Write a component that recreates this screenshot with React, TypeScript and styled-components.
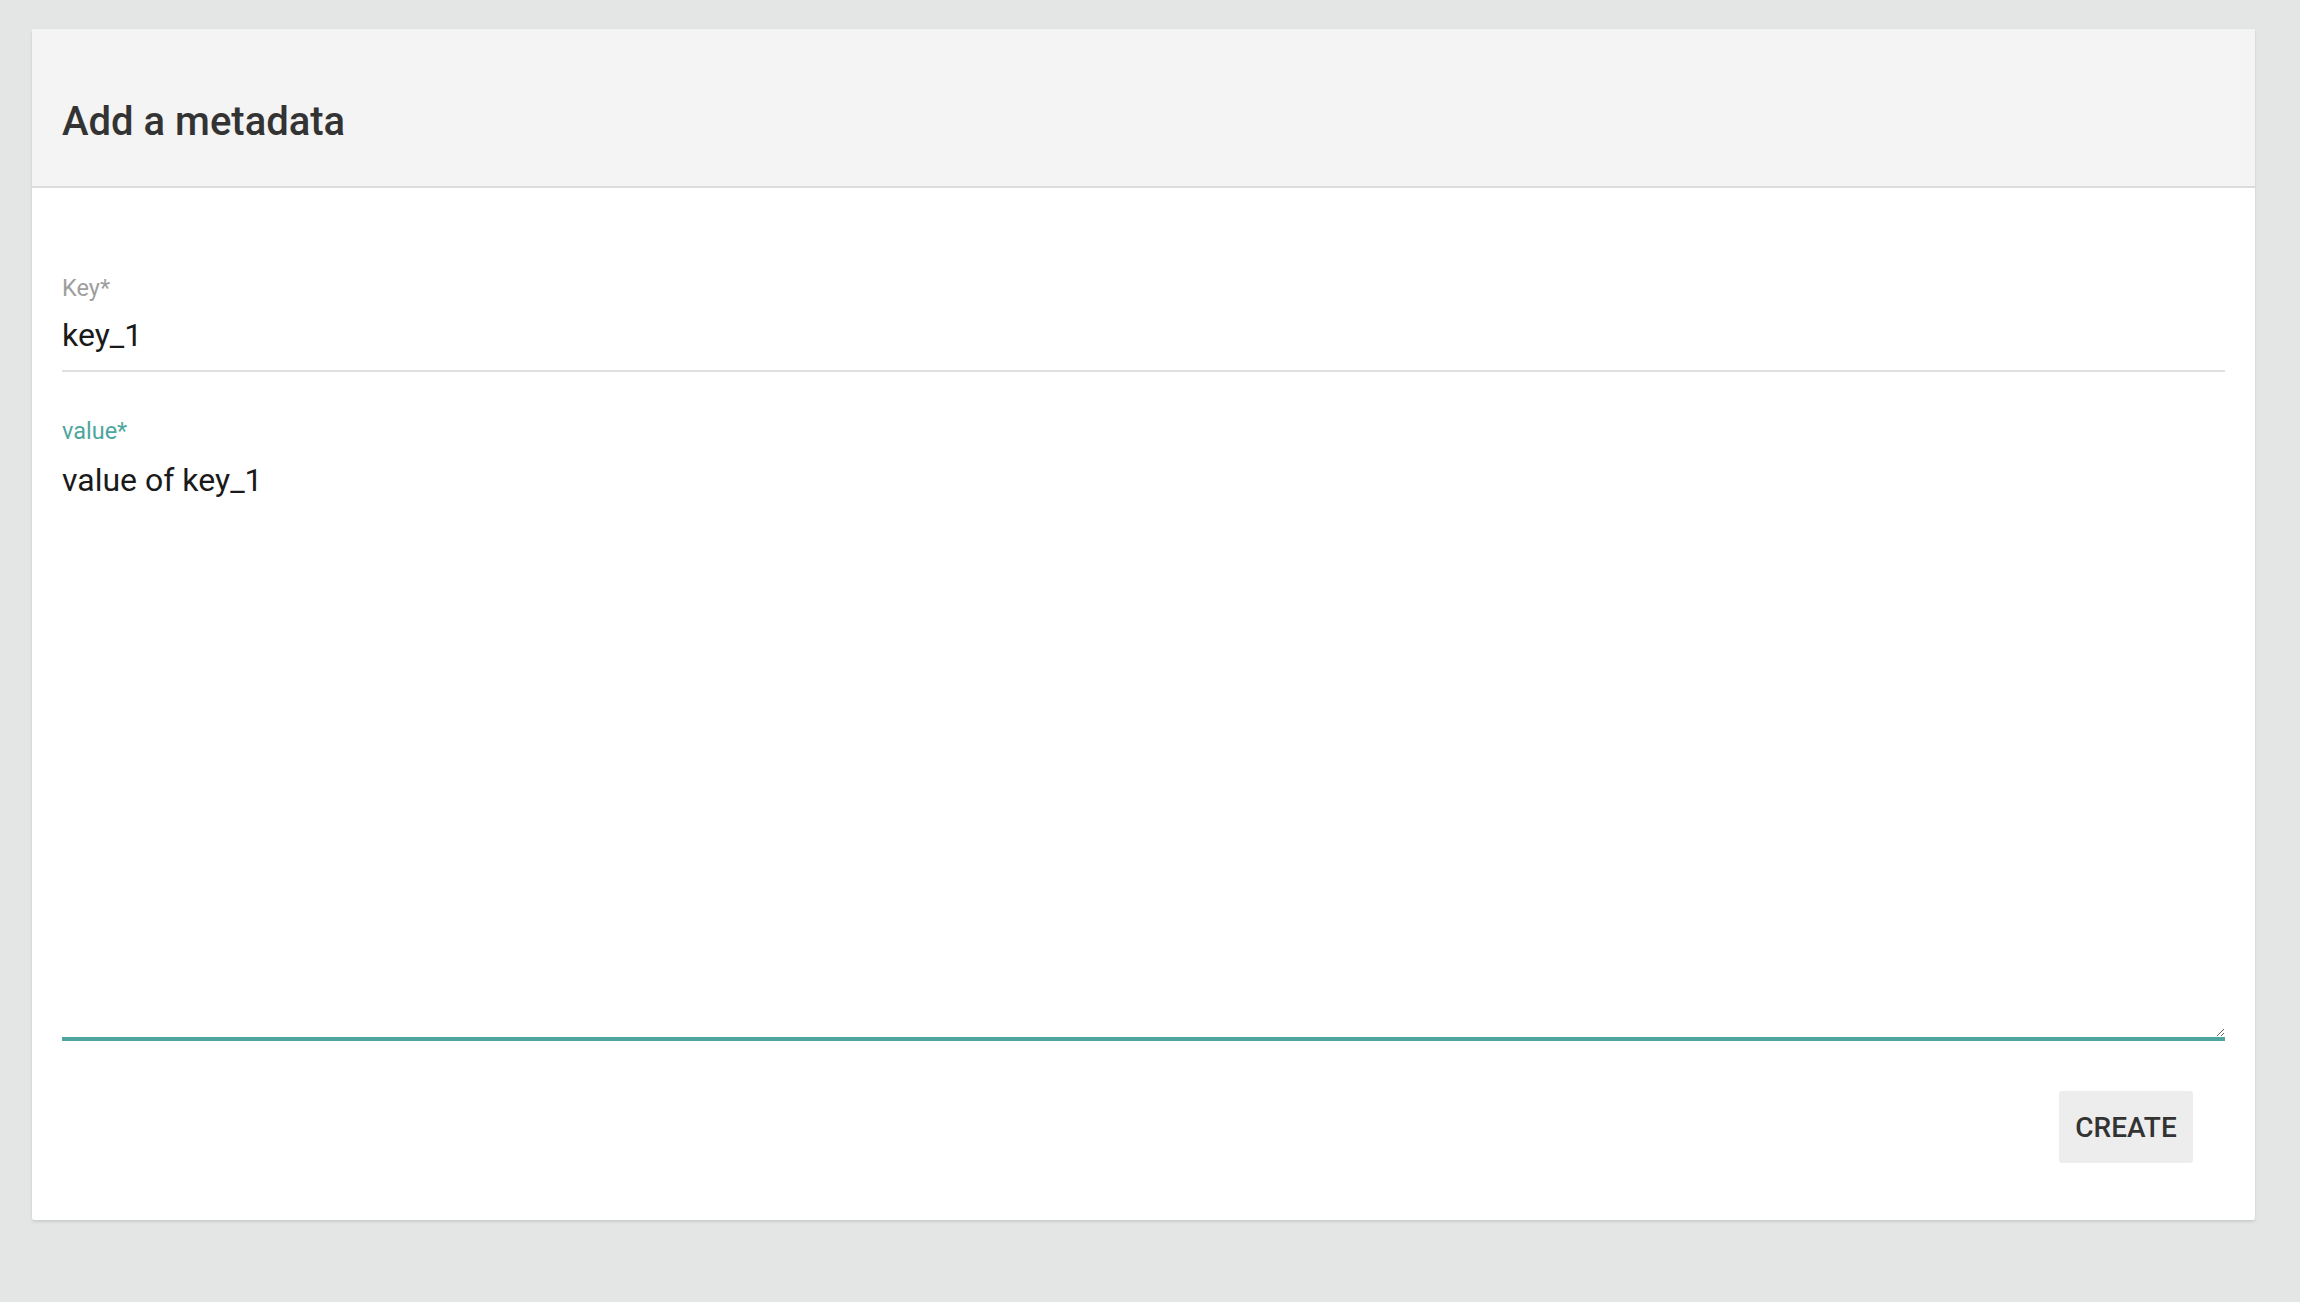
import styled, { createGlobalStyle } from 'styled-components';

const GlobalStyle = createGlobalStyle`
	html, body {
		margin: 0;
		padding: 0;
		background: #e4e6e5;
		font-family: Roboto, 'Liberation Sans', sans-serif;
	}
`;

const Page = styled.div`
	padding: 29px 45px 82px 32px;
	min-height: 1302px;
	box-sizing: border-box;
`;

const Card = styled.section`
	background: #fff;
	border-radius: 2px;
	box-shadow: 0 2px 3px rgba(0, 0, 0, 0.1), 0 0 1px rgba(0, 0, 0, 0.08);
	overflow: hidden;
`;

const Header = styled.header`
	height: 159px;
	box-sizing: border-box;
	padding: 69px 30px 0;
	background: #f4f4f4;
	border-bottom: 2px solid #dcdcdc;
`;

const Title = styled.h2`
	margin: 0;
	font-size: 40px;
	line-height: 48px;
	font-weight: 500;
	color: #333;
`;

const Body = styled.form`
	display: flex;
	flex-direction: column;
	padding: 87px 30px 57px;
`;

const Field = styled.div<{ $gap?: number }>`
	display: flex;
	flex-direction: column;
	margin-top: ${(p) => p.$gap ?? 0}px;
`;

const Label = styled.label<{ $focused?: boolean }>`
	font-size: 23.5px;
	line-height: 26px;
	color: ${(p) => (p.$focused ? '#4da69e' : '#9e9e9e')};
`;

const Input = styled.input`
	margin-top: 16px;
	padding: 0 0 17px;
	border: none;
	border-bottom: 2px solid #e0e0e0;
	outline: none;
	background: transparent;
	font-family: inherit;
	font-size: 32px;
	line-height: 36px;
	height: 55px;
	box-sizing: border-box;
	color: #1a1a1a;
`;

const TextArea = styled.textarea`
	margin-top: 18px;
	padding: 0;
	border: none;
	border-bottom: 4px solid #4da69e;
	outline: none;
	background: transparent;
	font-family: inherit;
	font-size: 32px;
	line-height: 36px;
	height: 579px;
	box-sizing: border-box;
	color: #1a1a1a;
	resize: vertical;
`;

const Actions = styled.div`
	display: flex;
	justify-content: flex-end;
	margin-top: 50px;
	padding-right: 32px;
`;

const Button = styled.button`
	width: 134px;
	height: 72px;
	border: none;
	border-radius: 3px;
	background: #ededed;
	color: #333;
	font-family: inherit;
	font-size: 28px;
	font-weight: 500;
	cursor: pointer;
`;

export default function App() {
	return (
		<>
			<GlobalStyle />
			<Page>
				<Card>
					<Header>
						<Title>Add a metadata</Title>
					</Header>
					<Body onSubmit={(e) => e.preventDefault()}>
						<Field>
							<Label htmlFor="key">Key*</Label>
							<Input id="key" defaultValue="key_1" />
						</Field>
						<Field $gap={46}>
							<Label htmlFor="value" $focused>
								value*
							</Label>
							<TextArea id="value" defaultValue="value of key_1" />
						</Field>
						<Actions>
							<Button type="submit">CREATE</Button>
						</Actions>
					</Body>
				</Card>
			</Page>
		</>
	);
}
